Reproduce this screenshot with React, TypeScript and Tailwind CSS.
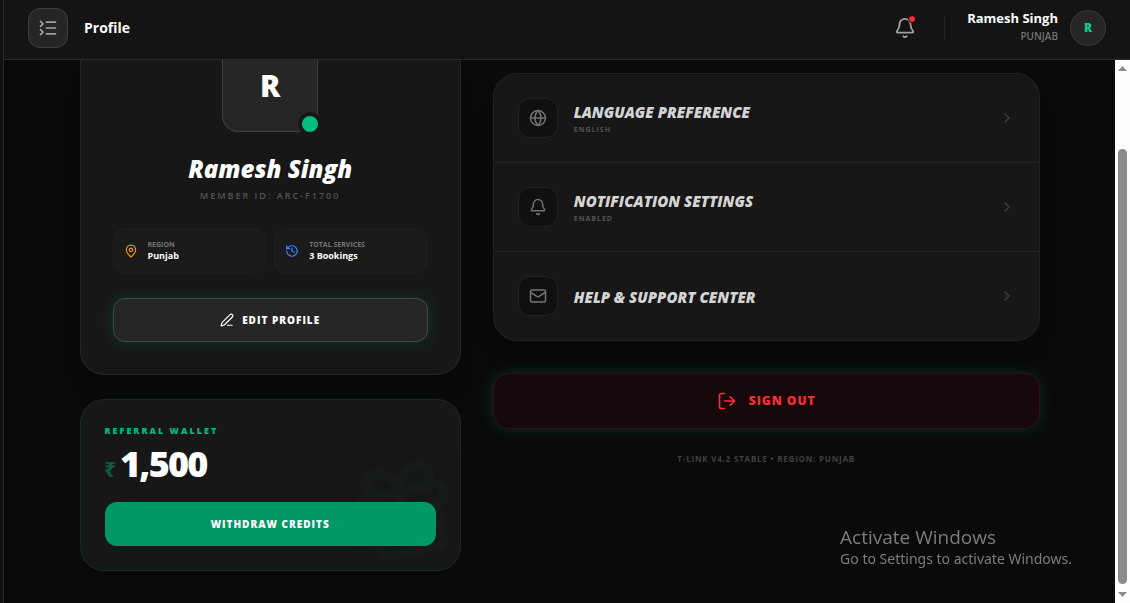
import {
  Bell,
  ChevronRight,
  Gift,
  Globe,
  History,
  ListCollapse,
  LogOut,
  Mail,
  MapPin,
  PenLine,
  type LucideIcon,
} from "lucide-react"

const settings: { icon: LucideIcon; title: string; status?: string }[] = [
  { icon: Globe, title: "Language Preference", status: "English" },
  { icon: Bell, title: "Notification Settings", status: "Enabled" },
  { icon: Mail, title: "Help & Support Center" },
]

function Header() {
  return (
    <header className="h-[60px] shrink-0 flex items-center justify-between bg-[#141414] border-b border-[#2b2b2b] px-6 pb-1">
      <div className="flex items-center gap-4">
        <button
          aria-label="Toggle menu"
          className="size-10 flex items-center justify-center rounded-xl bg-[#262626] border border-[#3c3c3c] text-neutral-400"
        >
          <ListCollapse size={20} />
        </button>
        <h1 className="text-sm font-bold text-white">Profile</h1>
      </div>
      <div className="flex items-center">
        <button aria-label="Notifications" className="relative text-neutral-400">
          <Bell size={22} />
          <span className="absolute -top-0.5 right-0 size-2 rounded-full bg-[#fb2c36] border border-[#141414]" />
        </button>
        <div className="w-px h-6 bg-[#262626] ml-7 mr-5.5" />
        <div className="text-right mr-3">
          <p className="text-[13px] leading-4 font-bold text-white">Ramesh Singh</p>
          <p className="text-[10px] leading-5 font-semibold text-neutral-500">PUNJAB</p>
        </div>
        <div className="size-9 rounded-full bg-[#262626] border border-[#3c3c3c] flex items-center justify-center text-xs font-extrabold text-[#00d492]">
          R
        </div>
      </div>
    </header>
  )
}

function Stat({ icon: Icon, color, label, value }: { icon: LucideIcon; color: string; label: string; value: string }) {
  return (
    <div className="flex items-center gap-2.5 h-[46px] px-2.5 rounded-xl bg-[#1b1b1b] border border-[#1e1e1e]">
      <Icon size={14} className={color} />
      <div>
        <p className="text-[7px] leading-[10px] font-bold uppercase text-neutral-500">{label}</p>
        <p className="text-[9px] leading-3 font-bold text-white">{value}</p>
      </div>
    </div>
  )
}

function ProfileCard() {
  return (
    <section className="bg-[#171717] border border-t-0 border-[#262626] rounded-b-3xl px-8 pb-8 text-center shadow-xl">
      <div className="relative w-24 h-[72px] mx-auto rounded-b-2xl bg-[#262626] border border-t-0 border-[#404040] pt-2 text-3xl leading-9 font-extrabold text-white">
        R
        <span className="absolute -right-[5px] -bottom-[5px] size-6 rounded-full bg-[#00bc7d] border-4 border-[#171717]" />
      </div>
      <h2 className="mt-5 text-2xl leading-[34px] font-extrabold italic text-white">Ramesh Singh</h2>
      <p className="mt-0.5 text-[9px] leading-4 font-semibold tracking-[2px] uppercase text-neutral-600">
        Member ID: ARC-F1700
      </p>
      <div className="mt-6 grid grid-cols-2 gap-2 text-left">
        <Stat icon={MapPin} color="text-[#fe9a00]" label="Region" value="Punjab" />
        <Stat icon={History} color="text-[#3b8bff]" label="Total Services" value="3 Bookings" />
      </div>
      <button className="mt-6 w-full h-11 flex items-center justify-center gap-2 rounded-xl bg-[#262626] border border-[#404844] text-[10px] font-extrabold tracking-[1px] uppercase text-white shadow-[0_0_15px_rgba(16,185,129,0.2)]">
        <PenLine size={14} />
        Edit Profile
      </button>
    </section>
  )
}

function WalletCard() {
  return (
    <section className="relative overflow-hidden bg-[#171717] border border-[#162b23] rounded-3xl p-6">
      <Gift size={112} className="absolute right-0 bottom-1 -rotate-12 text-[#00bc7d] opacity-[0.02]" />
      <p className="text-[9px] leading-3.5 font-extrabold tracking-[2px] uppercase text-[#00bc7d]">Referral Wallet</p>
      <p className="mt-1.5 h-10 flex items-baseline gap-1 text-white">
        <span className="text-xl leading-10 font-extrabold text-[#0c5a40]">₹</span>
        <span className="text-4xl leading-10 font-extrabold tracking-tighter">1,500</span>
      </p>
      <button className="relative mt-[18px] w-full h-11 rounded-xl bg-[#009966] text-[10px] font-extrabold tracking-[1px] uppercase text-white">
        Withdraw Credits
      </button>
    </section>
  )
}

function SettingsList() {
  return (
    <section className="overflow-hidden bg-[#171717] border border-[#222222] rounded-3xl shadow-xl divide-y divide-[#222222]">
      {settings.map(({ icon: Icon, title, status }) => (
        <button key={title} className="w-full h-[89px] last:h-[88px] flex items-center gap-4 px-6 text-left">
          <span className="size-10 flex items-center justify-center rounded-xl bg-[#101010] border border-[#222222] text-neutral-500">
            <Icon size={18} />
          </span>
          <span className="flex-1 pt-0.5">
            <span className="block text-[15px] leading-5 font-extrabold italic uppercase text-neutral-300">{title}</span>
            {status && (
              <span className="block mt-0.5 text-[7px] leading-3 font-bold tracking-[1px] uppercase text-neutral-600">
                {status}
              </span>
            )}
          </span>
          <ChevronRight size={16} className="text-neutral-700" />
        </button>
      ))}
    </section>
  )
}

function Scrollbar() {
  return (
    <div className="w-[15px] shrink-0 bg-[#fcfcfc] flex flex-col items-center justify-between py-1.5">
      <svg width="9" height="5" viewBox="0 0 9 5" fill="#8b8b8b">
        <path d="M4.5 0 9 5H0z" />
      </svg>
      <div className="flex-1 mt-[78px] mb-2 w-[9px] rounded-full bg-[#8b8b8b]" />
      <svg width="9" height="5" viewBox="0 0 9 5" fill="#8b8b8b">
        <path d="M4.5 5 0 0h9z" />
      </svg>
    </div>
  )
}

export default function App() {
  return (
    <div className="h-screen flex overflow-hidden bg-[#0a0a0a] font-['Open_Sans','Noto_Sans',sans-serif]">
      <aside className="w-1 shrink-0 bg-[#121212] border-r border-[#262626]" />
      <div className="flex-1 min-w-0 flex flex-col">
        <Header />
        <div className="flex-1 min-h-0 flex">
          <main className="flex-1 min-w-0 overflow-hidden">
            <div className="max-w-[960px] mx-auto grid grid-cols-12 gap-8">
              <div className="col-span-5 flex flex-col gap-6">
                <ProfileCard />
                <WalletCard />
              </div>
              <div className="col-span-7 pt-[13px]">
                <SettingsList />
                <button className="mt-8 w-full h-14 flex items-center justify-center gap-3 rounded-2xl bg-[#17090b] border border-[#32101a] text-xs font-extrabold tracking-[1px] uppercase text-[#fb2c36] shadow-[0_0_15px_rgba(16,185,129,0.2)]">
                  <LogOut size={20} />
                  Sign Out
                </button>
                <p className="mt-6 text-center text-[8px] leading-3 font-bold tracking-widest uppercase text-neutral-700">
                  T-Link v4.2 Stable • Region: Punjab
                </p>
              </div>
            </div>
          </main>
          <Scrollbar />
        </div>
      </div>
      <div className="fixed right-[58px] bottom-[34px] text-[#7c7c7c]">
        <p className="text-[19px] leading-6">Activate Windows</p>
        <p className="text-sm leading-5 font-['Noto_Sans',sans-serif]">Go to Settings to activate Windows.</p>
      </div>
    </div>
  )
}
